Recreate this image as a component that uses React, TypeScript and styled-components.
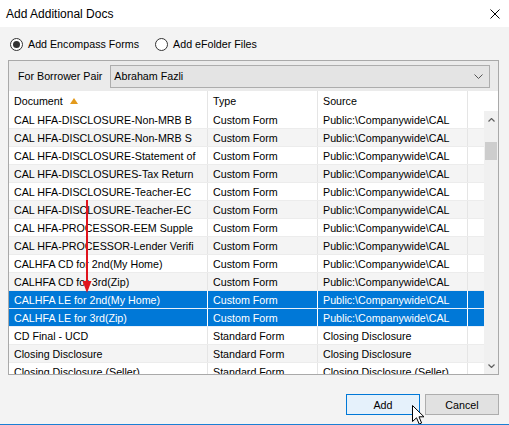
import React, { FC } from 'react'
import styled, { createGlobalStyle } from 'styled-components'

const GlobalStyle = createGlobalStyle`
	html, body {
		margin: 0;
		padding: 0;
		background: #f3f3f3;
	}
	body {
		font-family: 'Liberation Sans', Arial, sans-serif;
		font-size: 10.7px;
		color: #000;
	}
`

type Doc = [string, string, string]

const docs: Doc[] = [
	['CAL HFA-DISCLOSURE-Non-MRB B', 'Custom Form', 'Public:\\Companywide\\CAL'],
	['CAL HFA-DISCLOSURE-Non-MRB S', 'Custom Form', 'Public:\\Companywide\\CAL'],
	['CAL HFA-DISCLOSURE-Statement of', 'Custom Form', 'Public:\\Companywide\\CAL'],
	['CAL HFA-DISCLOSURES-Tax Return', 'Custom Form', 'Public:\\Companywide\\CAL'],
	['CAL HFA-DISCLOSURE-Teacher-EC', 'Custom Form', 'Public:\\Companywide\\CAL'],
	['CAL HFA-DISCLOSURE-Teacher-EC', 'Custom Form', 'Public:\\Companywide\\CAL'],
	['CAL HFA-PROCESSOR-EEM Supple', 'Custom Form', 'Public:\\Companywide\\CAL'],
	['CAL HFA-PROCESSOR-Lender Verifi', 'Custom Form', 'Public:\\Companywide\\CAL'],
	['CALHFA CD for 2nd(My Home)', 'Custom Form', 'Public:\\Companywide\\CAL'],
	['CALHFA CD for 3rd(Zip)', 'Custom Form', 'Public:\\Companywide\\CAL'],
	['CALHFA LE for 2nd(My Home)', 'Custom Form', 'Public:\\Companywide\\CAL'],
	['CALHFA LE for 3rd(Zip)', 'Custom Form', 'Public:\\Companywide\\CAL'],
	['CD Final - UCD', 'Standard Form', 'Closing Disclosure'],
	['Closing Disclosure', 'Standard Form', 'Closing Disclosure'],
	['Closing Disclosure (Seller)', 'Standard Form', 'Closing Disclosure (Seller)'],
]

const selectedRows = [10, 11]

const App: FC = () => {
	return (
		<Window>
			<GlobalStyle />
			<TitleBar>
				<span>{'Add Additional Docs'}</span>
				<CloseButton>
					<svg width='10' height='10' viewBox='0 0 10 10'>
						<path d='M0.5 0.5 L9.5 9.5 M9.5 0.5 L0.5 9.5' stroke='#000' strokeWidth='1' />
					</svg>
				</CloseButton>
			</TitleBar>
			<Body>
				<RadioRow>
					<RadioOption>
						<RadioCircle checked />
						{'Add Encompass Forms'}
					</RadioOption>
					<RadioOption>
						<RadioCircle checked={false} />
						{'Add eFolder Files'}
					</RadioOption>
				</RadioRow>
				<Panel>
					<FilterBar>
						<FilterLabel>{'For Borrower Pair'}</FilterLabel>
						<Combo>
							<span>{'Abraham Fazli'}</span>
							<svg width='9' height='5' viewBox='0 0 9 5'>
								<path d='M0.5 0.5 L4.5 4.5 L8.5 0.5' fill='none' stroke='#555' strokeWidth='1' />
							</svg>
						</Combo>
					</FilterBar>
					<HeaderRow>
						<HeaderCell>
							{'Document'}
							<SortIcon width='8' height='6' viewBox='0 0 8 6'>
								<path d='M4 0 L8 6 L0 6 Z' fill='#e39a1c' />
							</SortIcon>
						</HeaderCell>
						<HeaderCell>{'Type'}</HeaderCell>
						<HeaderCell>{'Source'}</HeaderCell>
						<HeaderCell last />
					</HeaderRow>
					<ListArea>
						<RowList>
							{docs.map((d, i) => {
								const sel = selectedRows.includes(i)
								return (
									<Row key={i} alt={i % 2 === 1} selected={sel}>
										<Cell selected={sel}>{d[0]}</Cell>
										<Cell selected={sel}>{d[1]}</Cell>
										<Cell selected={sel}>{d[2]}</Cell>
										<Cell selected={sel} last />
									</Row>
								)
							})}
						</RowList>
						<ScrollBar>
							<ScrollArrow>
								<svg width='7' height='4' viewBox='0 0 7 4'>
									<path d='M0.5 3.5 L3.5 0.5 L6.5 3.5' fill='none' stroke='#606060' strokeWidth='1.2' />
								</svg>
							</ScrollArrow>
							<ScrollTrack>
								<Thumb />
							</ScrollTrack>
							<ScrollArrow>
								<svg width='7' height='4' viewBox='0 0 7 4'>
									<path d='M0.5 0.5 L3.5 3.5 L6.5 0.5' fill='none' stroke='#606060' strokeWidth='1.2' />
								</svg>
							</ScrollArrow>
						</ScrollBar>
					</ListArea>
				</Panel>
				<Footer>
					<Button primary>{'Add'}</Button>
					<Button>{'Cancel'}</Button>
				</Footer>
			</Body>
			<RedArrow width='10' height='95' viewBox='0 0 10 95'>
				<rect x='4' y='0' width='2' height='84' fill='#e0141e' />
				<path d='M0.5 81 L9.5 81 L5 93 Z' fill='#e0141e' />
			</RedArrow>
			<Cursor width='13' height='20' viewBox='0 0 13 20'>
				<path
					d='M0.5 0.5 L0.5 16.5 L4.5 12.8 L7.2 19 L9.6 18 L7 11.8 L12 11.8 Z'
					fill='#fff'
					stroke='#000'
					strokeWidth='1'
					strokeLinejoin='miter'
				/>
			</Cursor>
		</Window>
	)
}

const Window = styled.div`
	position: relative;
	width: 509px;
	height: 425px;
	display: flex;
	flex-direction: column;
	background: #f3f3f3;
	border-bottom: 1px solid #1a7fd4;
	box-sizing: border-box;
	overflow: hidden;
`

const TitleBar = styled.div`
	height: 27px;
	flex: none;
	background: #fff;
	display: flex;
	align-items: center;
	justify-content: space-between;
	padding: 0 9px 0 6px;
	font-size: 12px;
`

const CloseButton = styled.div`
	display: flex;
	align-items: center;
	margin-top: 1px;
`

const Body = styled.div`
	flex: 1;
	display: flex;
	flex-direction: column;
	padding: 8px 10px 0 8px;
`

const RadioRow = styled.div`
	height: 18px;
	display: flex;
	align-items: center;
	gap: 16px;
	padding-left: 2px;
	margin-bottom: 7px;
`

const RadioOption = styled.label`
	display: inline-flex;
	align-items: center;
	gap: 5px;
`

const RadioCircle = styled.span<{ checked: boolean }>`
	width: 13px;
	height: 13px;
	box-sizing: border-box;
	border: 1px solid #333;
	border-radius: 50%;
	background: #fff;
	display: inline-flex;
	align-items: center;
	justify-content: center;
	&::after {
		content: '';
		width: 7px;
		height: 7px;
		border-radius: 50%;
		background: ${({ checked }) => (checked ? '#333' : 'transparent')};
	}
`

const Panel = styled.div`
	height: 315px;
	box-sizing: border-box;
	border: 1px solid #a9a9a9;
	display: flex;
	flex-direction: column;
	background: #fff;
`

const FilterBar = styled.div`
	height: 30px;
	flex: none;
	background: #ebebeb;
	display: flex;
	align-items: center;
	padding: 0 8px 0 9px;
	gap: 8px;
`

const FilterLabel = styled.span`
	white-space: nowrap;
`

const Combo = styled.div`
	flex: 1;
	height: 23px;
	box-sizing: border-box;
	border: 1px solid #adadad;
	background: #e4e4e4;
	display: flex;
	align-items: center;
	justify-content: space-between;
	padding: 0 6px 0 3px;
`

const HeaderRow = styled.div`
	height: 20px;
	flex: none;
	display: grid;
	grid-template-columns: 199px 110px 150px 1fr;
	background: #fff;
`

const HeaderCell = styled.div<{ last?: boolean }>`
	display: flex;
	align-items: center;
	gap: 7px;
	padding-left: 5px;
	border-right: ${({ last }) => (last ? 'none' : '1px solid #e5e5e5')};
`

const SortIcon = styled.svg`
	margin-top: -1px;
`

const ListArea = styled.div`
	flex: 1;
	display: flex;
	min-height: 0;
`

const RowList = styled.div`
	flex: 1;
	overflow: hidden;
`

const Row = styled.div<{ alt: boolean; selected: boolean }>`
	height: 18px;
	box-sizing: border-box;
	display: grid;
	grid-template-columns: 199px 110px 150px 1fr;
	background: ${({ alt, selected }) =>
		selected ? '#0078d7' : alt ? '#f4f4f4' : '#fff'};
	border-bottom: 1px solid ${({ selected }) => (selected ? '#e8f0fa' : '#ececec')};
`

const Cell = styled.div<{ selected: boolean; last?: boolean }>`
	display: flex;
	align-items: center;
	padding: 1px 0 0 5px;
	white-space: nowrap;
	overflow: hidden;
	color: ${({ selected }) => (selected ? '#fff' : '#000')};
	border-right: ${({ last, selected }) =>
		last ? 'none' : `1px solid ${selected ? '#ffffff' : '#e5e5e5'}`};
`

const ScrollBar = styled.div`
	width: 14px;
	flex: none;
	background: #f0f0f0;
	display: flex;
	flex-direction: column;
`

const ScrollArrow = styled.div`
	height: 17px;
	display: flex;
	align-items: center;
	justify-content: center;
`

const ScrollTrack = styled.div`
	flex: 1;
	padding: 14px 1px 0;
`

const Thumb = styled.div`
	height: 18px;
	background: #cdcdcd;
`

const Footer = styled.div`
	display: flex;
	justify-content: flex-end;
	gap: 5px;
	margin-top: 19px;
`

const Button = styled.button<{ primary?: boolean }>`
	width: 74px;
	height: 21px;
	box-sizing: border-box;
	padding: 0;
	font-family: 'Liberation Sans', Arial, sans-serif;
	font-size: 10.7px;
	color: #000;
	border: 1px solid ${({ primary }) => (primary ? '#0078d7' : '#adadad')};
	background: ${({ primary }) => (primary ? '#e5f1fb' : '#e1e1e1')};
`

const RedArrow = styled.svg`
	position: absolute;
	left: 82px;
	top: 200px;
`

const Cursor = styled.svg`
	position: absolute;
	left: 412px;
	top: 405px;
`

export default App
